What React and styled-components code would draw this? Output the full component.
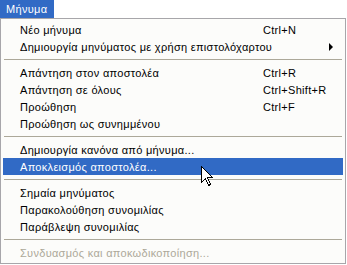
import React from "react";
import styled, { createGlobalStyle } from "styled-components";

const Global = createGlobalStyle`
  html, body { margin: 0; padding: 0; background: #ffffff; }
  body { font-family: "Liberation Sans", Arial, sans-serif; font-size: 11px; }
`;

const Page = styled.div`
  position: relative;
  width: 347px;
  height: 265px;
  overflow: hidden;
  font-family: "Liberation Sans", Arial, sans-serif;
  font-size: 11px;
  letter-spacing: 0.3px;
`;

const Tab = styled.div`
  width: 54px;
  height: 18px;
  box-sizing: border-box;
  padding-left: 6px;
  background: #316ac5;
  color: #ffffff;
  line-height: 18px;
`;

const Menu = styled.div`
  width: 346px;
  box-sizing: border-box;
  border: 1px solid #a7a6aa;
  background: #fcfcfa;
  padding: 2px 2px;
  display: flex;
  flex-direction: column;
`;

const Item = styled.div`
  height: 17px;
  display: grid;
  grid-template-columns: 243px 1fr 14px;
  align-items: center;
  padding-left: 17px;
  color: ${(p) => (p.$disabled ? "#aca899" : p.$active ? "#ffffff" : "#000000")};
  background: ${(p) => (p.$active ? "#316ac5" : "transparent")};
  white-space: nowrap;
`;

const Label = styled.span``;
const Shortcut = styled.span``;

const Arrow = styled.span`
  width: 0;
  height: 0;
  border-top: 4px solid transparent;
  border-bottom: 4px solid transparent;
  border-left: 4px solid #000;
  justify-self: start;
`;

const Sep = styled.div`
  height: 9px;
  display: flex;
  align-items: center;
  padding: 0 1px;
  &::before {
    content: "";
    flex: 1;
    height: 1px;
    background: #aca899;
  }
`;

const Cursor = styled.svg`
  position: absolute;
  left: 201px;
  top: 166px;
`;

const items = [
  { l: "Νέο μήνυμα", s: "Ctrl+N" },
  { l: "Δημιουργία μηνύματος με χρήση επιστολόχαρτου", sub: true },
  "sep",
  { l: "Απάντηση στον αποστολέα", s: "Ctrl+R" },
  { l: "Απάντηση σε όλους", s: "Ctrl+Shift+R" },
  { l: "Προώθηση", s: "Ctrl+F" },
  { l: "Προώθηση ως συνημμένου" },
  "sep",
  { l: "Δημιουργία κανόνα από μήνυμα..." },
  { l: "Αποκλεισμός αποστολέα...", active: true },
  "sep",
  { l: "Σημαία μηνύματος" },
  { l: "Παρακολούθηση συνομιλίας" },
  { l: "Παράβλεψη συνομιλίας" },
  "sep",
  { l: "Συνδυασμός και αποκωδικοποίηση...", disabled: true },
];

export default function App() {
  return (
    <Page>
      <Global />
      <Tab>Μήνυμα</Tab>
      <Menu>
        {items.map((it, i) =>
          it === "sep" ? (
            <Sep key={i} />
          ) : (
            <Item key={i} $active={it.active} $disabled={it.disabled}>
              <Label>{it.l}</Label>
              <Shortcut>{it.s || ""}</Shortcut>
              {it.sub ? <Arrow /> : <span />}
            </Item>
          )
        )}
      </Menu>
      <Cursor width="13" height="21" viewBox="0 0 13 21">
        <path
          d="M0.5 0.5 L0.5 16.5 L4.5 12.5 L7.5 19.5 L9.5 18.5 L6.5 11.5 L11.5 11.5 Z"
          fill="#ffffff"
          stroke="#000000"
          strokeWidth="1"
          shapeRendering="crispEdges"
        />
      </Cursor>
    </Page>
  );
}
